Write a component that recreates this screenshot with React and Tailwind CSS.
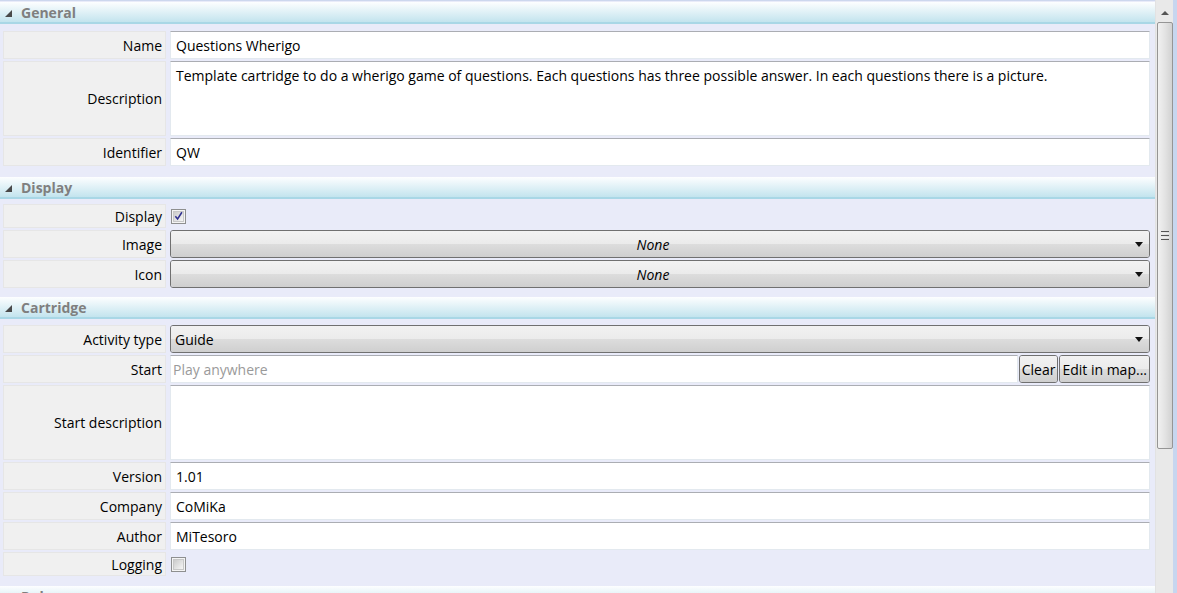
import React from 'react';

const font = { fontFamily: '"Open Sans", "Noto Sans", sans-serif' };

function SectionHeader({ title }) {
  return (
    <div className="flex h-[22px] shrink-0 items-center border-b-2 border-[#a9d7e6] bg-gradient-to-b from-[#fdfeff] to-[#c3e4ee] pl-[5px]">
      <svg width="7" height="7" viewBox="0 0 7 7" className="mt-[2px]">
        <polygon points="7,0 7,7 0,7" fill="#4a4a4a" />
      </svg>
      <span className="mt-[2px] ml-[9px] text-[14px] font-bold leading-none text-[#7f7f7f]">
        {title}
      </span>
    </div>
  );
}

function Label({ children, h = 'h-[28px]' }) {
  return (
    <div
      className={`flex w-[163px] shrink-0 items-center justify-end border border-[#e6e6e6] bg-[#f0f0f0] pr-[3px] text-[14px] text-black ${h}`}
    >
      {children}
    </div>
  );
}

function TextBox({ value, multiline, placeholder, className = '' }) {
  return (
    <div
      className={`flex flex-1 border border-[#e3e9ef] border-t-[#abadb3] bg-white px-[5px] text-[14px] text-black ${
        multiline ? 'items-start pt-[3px]' : 'items-center'
      } ${className}`}
    >
      {placeholder ? (
        <span className="-ml-[3px] text-[#9a9a9a]">{placeholder}</span>
      ) : (
        value
      )}
    </div>
  );
}

function GlossButton({ children, className = '' }) {
  return (
    <div
      className={`relative flex items-center overflow-hidden rounded-[3px] border border-[#707070] text-[14px] text-black ${className}`}
    >
      <div className="absolute inset-0 flex flex-col">
        <div className="flex-1 bg-gradient-to-b from-[#f2f2f2] to-[#ebebeb]" />
        <div className="flex-1 bg-gradient-to-b from-[#dddddd] to-[#cfcfcf]" />
      </div>
      <div className="relative flex w-full items-center">{children}</div>
    </div>
  );
}

function Combo({ value, italic, centered }) {
  return (
    <GlossButton className="h-[28px] flex-1">
      <span
        className={`flex-1 ${centered ? 'text-center' : 'pl-[4px]'} ${
          italic ? 'italic' : ''
        }`}
      >
        {value}
      </span>
      <svg width="8" height="5" viewBox="0 0 8 5" className="mr-[6px]">
        <polygon points="0,0 8,0 4,5" fill="#111" />
      </svg>
    </GlossButton>
  );
}

function CheckBox({ checked }) {
  return (
    <div className="ml-[1px] flex h-[15px] w-[15px] items-center justify-center border border-[#8e8f8f] bg-[#f4f4f4]">
      <div className="flex h-[11px] w-[11px] items-center justify-center border border-[#c8c8c8] bg-gradient-to-br from-[#cbcbcb] to-[#f6f6f6]">
        {checked && (
          <svg width="10" height="10" viewBox="0 0 10 10">
            <path
              d="M1.5 5.2 L4 8.2 L8.8 0.8"
              fill="none"
              stroke="#2f2f8f"
              strokeWidth="1.7"
            />
          </svg>
        )}
      </div>
    </div>
  );
}

function Row({ label, children, h = 'h-[28px]' }) {
  return (
    <div className="flex gap-[4px] pr-[5px] pl-[3px]">
      <Label h={h}>{label}</Label>
      <div className={`flex flex-1 items-center ${h}`}>{children}</div>
    </div>
  );
}

function Scrollbar() {
  return (
    <div className="flex w-[18px] shrink-0 flex-col border-l border-[#e2e2e2] bg-[#e9e9e9]">
      <div className="flex h-[22px] items-center justify-center">
        <svg width="8" height="4" viewBox="0 0 8 4" className="mt-[3px]">
          <polygon points="0,4 8,4 4,0" fill="#555" />
        </svg>
      </div>
      <div className="ml-[1px] flex h-[427px] w-[16px] items-center justify-center rounded-[2px] border border-[#959595] bg-gradient-to-r from-[#f1f1f1] via-[#e3e3e3] to-[#d2d2d2]">
        <div className="flex w-[8px] flex-col gap-[1px]">
          <div className="h-[1px] bg-[#555]" />
          <div className="h-[1px] bg-[#eee]" />
          <div className="h-[1px] bg-[#555]" />
          <div className="h-[1px] bg-[#eee]" />
          <div className="h-[1px] bg-[#555]" />
        </div>
      </div>
    </div>
  );
}

export default function App() {
  return (
    <div
      className="flex h-[593px] w-[1177px] overflow-hidden bg-[#e9ebf9]"
      style={font}
    >
      <div className="flex flex-1 flex-col border-t border-[#cdd7ee] pt-[1px]">
        <SectionHeader title="General" />
        <div className="flex flex-col gap-[2px] pt-[7px] pb-[11px]">
          <Row label="Name">
            <TextBox value="Questions Wherigo" className="h-full" />
          </Row>
          <Row label="Description" h="h-[75px]">
            <TextBox
              multiline
              className="h-full"
              value="Template cartridge to do a wherigo game of questions. Each questions has three possible answer. In each questions there is a picture."
            />
          </Row>
          <Row label="Identifier">
            <TextBox value="QW" className="h-full" />
          </Row>
        </div>
        <SectionHeader title="Display" />
        <div className="flex flex-col gap-[2px] pt-[5px] pb-[9px]">
          <Row label="Display" h="h-[24px]">
            <CheckBox checked />
          </Row>
          <Row label="Image">
            <Combo value="None" italic centered />
          </Row>
          <Row label="Icon">
            <Combo value="None" italic centered />
          </Row>
        </div>
        <SectionHeader title="Cartridge" />
        <div className="flex flex-col gap-[2px] pt-[6px] pb-[10px]">
          <Row label="Activity type">
            <Combo value="Guide" />
          </Row>
          <Row label="Start">
            <TextBox placeholder="Play anywhere" className="h-full" />
            <GlossButton className="ml-px h-full px-[2px]">Clear</GlossButton>
            <GlossButton className="ml-px h-full px-[2px]">
              Edit in map...
            </GlossButton>
          </Row>
          <Row label="Start description" h="h-[75px]">
            <TextBox multiline className="h-full" value="" />
          </Row>
          <Row label="Version">
            <TextBox value="1.01" className="h-full" />
          </Row>
          <Row label="Company">
            <TextBox value="CoMiKa" className="h-full" />
          </Row>
          <Row label="Author">
            <TextBox value="MiTesoro" className="h-full" />
          </Row>
          <Row label="Logging" h="h-[24px]">
            <CheckBox />
          </Row>
        </div>
        <SectionHeader title="Rules" />
      </div>
      <Scrollbar />
      <div className="w-[4px] shrink-0 bg-[#c7d6ef]" />
    </div>
  );
}
